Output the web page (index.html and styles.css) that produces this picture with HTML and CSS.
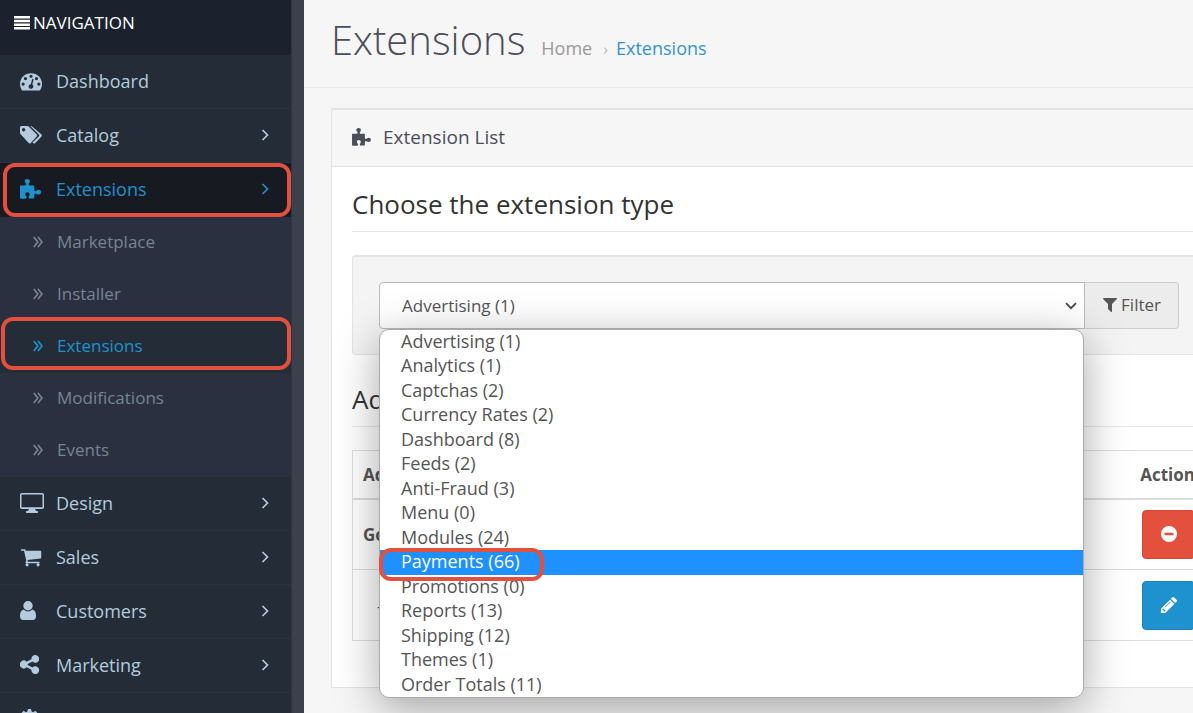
FILE: index.html
```
<!DOCTYPE html>
<html lang="en">
<head>
<meta charset="UTF-8">
<meta name="viewport" content="width=device-width, initial-scale=1.0">
<title>Extensions</title>
<link rel="stylesheet" href="styles.css">
</head>
<body>
<!-- Icon shapes -->
<svg class="sprite" aria-hidden="true">
  <symbol id="i-dash" viewBox="0 0 1792 1792"><path d="M384 1152q0-53-37.500-90.500t-90.500-37.500-90.500 37.500-37.500 90.500 37.500 90.500 90.500 37.500 90.500-37.500 37.500-90.500zm192-448q0-53-37.500-90.500t-90.500-37.500-90.500 37.500-37.500 90.500 37.500 90.500 90.500 37.500 90.500-37.500 37.500-90.500zm428 481l101-382q6-26-7.500-48.500t-38.500-29.500-48 6.500-30 39.500l-101 382q-60 5-107 43.500t-63 98.500q-20 77 20 146t117 89 146-20 89-117q16-60-6-117t-72-91zm660-33q0-53-37.500-90.500t-90.500-37.500-90.500 37.500-37.500 90.500 37.500 90.500 90.500 37.500 90.500-37.500 37.500-90.500zm-640-640q0-53-37.500-90.500t-90.500-37.500-90.500 37.500-37.500 90.500 37.500 90.500 90.500 37.500 90.500-37.500 37.500-90.500zm448 192q0-53-37.500-90.500t-90.500-37.500-90.500 37.500-37.500 90.500 37.500 90.500 90.500 37.500 90.500-37.500 37.500-90.500zm320 448q0 261-141 483-19 29-54 29h-1402q-35 0-54-29-141-221-141-483 0-182 71-348t191-286 286-191 348-71 348 71 286 191 191 286 71 348z"/></symbol>
  <symbol id="i-tags" viewBox="0 0 23 18"><path fill-rule="evenodd" d="M0 1.500Q0 0 1.500 0H7.300Q8.300 0 9.200 .9L16.700 8.400Q17.600 9.500 16.700 10.500L10.800 16.900Q9.700 17.900 8.700 16.900L.9 8.600Q0 7.700 0 6.700ZM3.600 2A1.700 1.700 0 1 0 3.600 5.400A1.700 1.700 0 1 0 3.600 2ZM10.200 0Q11.700 0 12.700 1L21.500 8.400Q22.500 9.500 21.500 10.500L15.200 16.900Q14 18 12.800 17L12.500 16.600L18.800 10.500Q19.800 9.500 18.800 8.400Z"/></symbol>
  <symbol id="i-puzzle" viewBox="0 0 21 20"><path d="M0 6.500H4Q6.200 6.500 6.200 5.200Q6.200 4.700 5.500 4Q4.700 3.200 4.700 2.300Q4.700 0 7.300 0Q9.900 0 9.900 2.300Q9.900 3.200 9.200 4Q8.500 4.700 8.500 5.200Q8.500 6.500 10.500 6.500H14.200V10.200Q14.200 12.300 15.500 12.300Q16 12.300 16.700 11.500Q17.500 10.800 18.400 10.800Q21 10.800 21 13.200Q21 15.600 18.400 15.600Q17.500 15.600 16.700 15Q16 14.400 15.500 14.400Q14.200 14.400 14.200 16.500V19.500H9.300Q8.600 19.500 8.600 18.500Q8.600 17.700 9.200 16.900Q9.700 16.100 9.700 15.300Q9.700 13.200 7.500 13.200Q5.300 13.200 5.300 15.300Q5.300 16.100 6 16.900Q6.700 17.700 6.700 18.600Q6.700 19.500 5 19.800Q2.500 20 0 19.500Z"/></symbol>
  <symbol id="i-desktop" viewBox="0 0 24 20"><path fill-rule="evenodd" d="M1.800 0H22.200Q24 0 24 1.800V14.200Q24 16 22.200 16H15Q15.200 17.500 16.500 18H17.500Q18 18 18 19T17.500 20H6.500Q6 20 6 19T6.500 18H7.500Q8.800 17.500 9 16H1.800Q0 16 0 14.200V1.800Q0 0 1.800 0ZM2 1.500Q1.500 1.500 1.500 2V13.800Q1.500 14.300 2 14.300H22Q22.500 14.300 22.500 13.800V2Q22.500 1.500 22 1.500Z"/></symbol>
  <symbol id="i-cart" viewBox="0 0 1792 1792"><path d="M704 1536q0 52-38 90t-90 38-90-38-38-90 38-90 90-38 90 38 38 90zm896 0q0 52-38 90t-90 38-90-38-38-90 38-90 90-38 90 38 38 90zm128-1088v512q0 24-16.500 42.500t-40.500 21.500l-1044 122q13 60 13 70 0 16-24 64h920q26 0 45 19t19 45-19 45-45 19h-1024q-26 0-45-19t-19-45q0-11 8-31.500t16-36 21.500-40 15.500-29.500l-177-823h-204q-26 0-45-19t-19-45 19-45 45-19h256q16 0 28.500 6.500t19.500 15.500 13 24.500 8 26 5.500 29.500 4.500 26h1201q26 0 45 19t19 45z"/></symbol>
  <symbol id="i-user" viewBox="0 0 16 19"><path d="M8 0A4.700 4.700 0 1 1 8 9.400A4.700 4.700 0 1 1 8 0ZM3.800 8.600Q5.500 10.600 8 10.600T12.200 8.600Q16 9.200 16 15Q16 19 12.700 19H3.300Q0 19 0 15Q0 9.200 3.800 8.600Z"/></symbol>
  <symbol id="i-share" viewBox="0 0 19 19"><path d="M15.200 0A3.900 3.900 0 1 1 12.500 6.600L7.700 9V10L12.500 12.400A3.900 3.900 0 1 1 11.400 14.800L6.600 12.200A3.900 3.900 0 1 1 6.600 6.800L11.400 4.200A3.900 3.900 0 0 1 15.200 0Z"/></symbol>
  <symbol id="i-cog" viewBox="0 0 20 20"><path fill-rule="evenodd" d="M8.400 0H11.600L12.200 2.700L13.800 3.400L16.200 1.900L18.400 4.100L16.800 6.300L17.400 7.900L20 8.400V11.600L17.400 12.200L16.800 13.800L18.300 16.100L16.100 18.300L13.800 16.800L12.200 17.400L11.600 20H8.400L7.800 17.400L6.200 16.800L3.900 18.300L1.700 16.100L3.200 13.800L2.600 12.200L0 11.600V8.400L2.600 7.900L3.200 6.300L1.600 4.100L3.800 1.900L6.200 3.400L7.800 2.700ZM10 6.700A3.300 3.300 0 1 0 10 13.300A3.300 3.300 0 1 0 10 6.700Z"/></symbol>
  <symbol id="i-right" viewBox="0 0 8 12"><path class="line" d="M1.500 1L6.500 6L1.500 11"/></symbol>
  <symbol id="i-double" viewBox="0 0 10 12"><path class="line" d="M.8 1L4.800 6L.8 11M5 1L9 6L5 11"/></symbol>
  <symbol id="i-down" viewBox="0 0 12 8"><path class="line" d="M1 1.200L6 6.200L11 1.200"/></symbol>
  <symbol id="i-bars" viewBox="0 0 16 14"><path d="M0 0H16V2.500H0ZM0 3.700H16V6.200H0ZM0 7.400H16V9.900H0ZM0 11.100H16V13.600H0Z"/></symbol>
  <symbol id="i-filter" viewBox="0 0 14 14"><path d="M.6 0H13.400Q14.300 .3 13.700 1.200L9 6V13.400Q8.700 14.300 7.900 13.700L5.300 11.300Q5 11 5 10.500V6L.3 1.200Q-.3 .3 .6 0Z"/></symbol>
  <symbol id="i-minus" viewBox="0 0 16 16"><path fill-rule="evenodd" d="M8 0A8 8 0 1 1 8 16A8 8 0 1 1 8 0ZM4 6.700Q3.400 6.700 3.400 7.300V8.700Q3.400 9.300 4 9.300H12Q12.600 9.300 12.600 8.700V7.300Q12.600 6.700 12 6.700Z"/></symbol>
  <symbol id="i-pencil" viewBox="0 0 16 16"><path fill-rule="evenodd" d="M9 2.700L13.300 7L4.300 16H0V11.700ZM3.700 14.600L4.500 13.800L2.200 11.500L1.400 12.300V13.300H2.700V14.600ZM9.100 4.700L3.700 10.100L4.200 10.600L9.600 5.200ZM9.900 1.800L11.300 .4Q12.200-.4 13.200 .4L15.600 2.800Q16.400 3.700 15.600 4.700L14.200 6.100Z"/></symbol>
</svg>

<div class="page">
  <!-- Sidebar -->
  <aside class="sidebar">
    <nav class="nav">
      <div class="nav-title"><svg class="icon-bars"><use href="#i-bars"/></svg>NAVIGATION</div>
      <a class="nav-item" href="#"><span class="nav-icon"><svg class="i22"><use href="#i-dash"/></svg></span>Dashboard</a>
      <a class="nav-item" href="#"><span class="nav-icon"><svg class="i-tags"><use href="#i-tags"/></svg></span>Catalog<svg class="chevron"><use href="#i-right"/></svg></a>
      <a class="nav-item active" href="#"><span class="nav-icon"><svg class="i-puzzle"><use href="#i-puzzle"/></svg></span>Extensions<svg class="chevron"><use href="#i-right"/></svg><span class="ring"></span></a>
      <div class="subnav">
        <a class="sub-item" href="#"><svg class="double"><use href="#i-double"/></svg>Marketplace</a>
        <a class="sub-item" href="#"><svg class="double"><use href="#i-double"/></svg>Installer</a>
        <a class="sub-item current" href="#"><svg class="double"><use href="#i-double"/></svg>Extensions<span class="ring"></span></a>
        <a class="sub-item" href="#"><svg class="double"><use href="#i-double"/></svg>Modifications</a>
        <a class="sub-item" href="#"><svg class="double"><use href="#i-double"/></svg>Events</a>
      </div>
      <a class="nav-item" href="#"><span class="nav-icon"><svg class="i-desktop"><use href="#i-desktop"/></svg></span>Design<svg class="chevron"><use href="#i-right"/></svg></a>
      <a class="nav-item" href="#"><span class="nav-icon"><svg class="i22"><use href="#i-cart"/></svg></span>Sales<svg class="chevron"><use href="#i-right"/></svg></a>
      <a class="nav-item" href="#"><span class="nav-icon"><svg class="i-user"><use href="#i-user"/></svg></span>Customers<svg class="chevron"><use href="#i-right"/></svg></a>
      <a class="nav-item" href="#"><span class="nav-icon"><svg class="i19"><use href="#i-share"/></svg></span>Marketing<svg class="chevron"><use href="#i-right"/></svg></a>
      <a class="nav-item" href="#"><span class="nav-icon"><svg class="i19"><use href="#i-cog"/></svg></span>System<svg class="chevron"><use href="#i-right"/></svg></a>
    </nav>
  </aside>

  <!-- Content -->
  <main class="content">
    <header class="page-header">
      <h1>Extensions</h1>
      <div class="breadcrumb"><a href="#">Home</a><span class="sep">›</span><a class="here" href="#">Extensions</a></div>
    </header>

    <section class="panel">
      <h3 class="panel-heading"><svg class="icon-panel"><use href="#i-puzzle"/></svg>Extension List</h3>
      <div class="panel-body">
        <h2 class="legend">Choose the extension type</h2>
        <div class="well">
          <div class="select-wrap">
            <select class="select" aria-label="Extension type">
              <option>Advertising (1)</option>
              <option>Analytics (1)</option>
              <option>Captchas (2)</option>
              <option>Payments (66)</option>
            </select>
            <svg class="caret"><use href="#i-down"/></svg>
            <!-- Opened list -->
            <ul class="options">
              <li>Advertising (1)</li>
              <li>Analytics (1)</li>
              <li>Captchas (2)</li>
              <li>Currency Rates (2)</li>
              <li>Dashboard (8)</li>
              <li>Feeds (2)</li>
              <li>Anti-Fraud (3)</li>
              <li>Menu (0)</li>
              <li>Modules (24)</li>
              <li class="selected">Payments (66)<span class="ring"></span></li>
              <li>Promotions (0)</li>
              <li>Reports (13)</li>
              <li>Shipping (12)</li>
              <li>Themes (1)</li>
              <li>Order Totals (11)</li>
            </ul>
          </div>
          <button class="filter-btn" type="button"><svg class="icon-filter"><use href="#i-filter"/></svg>Filter</button>
        </div>

        <h2 class="legend">Advertising</h2>
        <table class="table">
          <thead>
            <tr><th>Advertising Name</th><th class="right">Action</th></tr>
          </thead>
          <tbody>
            <tr><td><b>Google</b></td><td class="right"><button class="btn btn-danger" type="button" aria-label="Uninstall"><svg class="icon-btn"><use href="#i-minus"/></svg></button></td></tr>
            <tr><td class="store">-</td><td class="right"><button class="btn btn-primary" type="button" aria-label="Edit"><svg class="icon-btn"><use href="#i-pencil"/></svg></button></td></tr>
          </tbody>
        </table>
      </div>
    </section>
  </main>
</div>
</body>
</html>
```
FILE: styles.css
```
:root {
  --blue:#1e91cf;
  --red:#e3503e;
  --line:#e3e3e3;
  --text:#555;
}

* {box-sizing:border-box;}

html, body {
  margin:0; padding:0;
  height:100%;
  overflow:hidden;
}
body {
  font-family:'Open Sans', sans-serif;
  font-size:17px;
  color:var(--text);
  background:#f6f6f6;
}
a {text-decoration:none; color:inherit;}
svg {fill:currentColor; flex:none;}
.line {fill:none; stroke:currentColor; stroke-width:1.700;}
.sprite {display:none;}

.page {display:flex; height:100%;}

/* Sidebar */
.sidebar {width:304px; flex:none; padding-right:12px; background:#3a414d;}
.nav {height:100%; background:#242d37; border-right:1px solid #2b3641;}
.nav-title {
  display:flex; align-items:center; gap:3px;
  height:55px; padding:0 14px 10px;
  background:#1b222e; color:#fff;
  font-size:17px;
}
.icon-bars {width:16px; height:14px;}
.nav-item {
  position:relative;
  display:flex; align-items:center;
  height:54px; padding:0 22px 2px 20px;
  border-bottom:1px solid #27343e;
  color:#b3cbdd;
  font-size:18px;
}
.nav-icon {display:flex; align-items:center; width:36px;}
.i22 {width:22px; height:22px;}
.i19 {width:19px; height:19px;}
.i-tags {width:23px; height:18px;}
.i-puzzle {width:21px; height:20px;}
.i-desktop {width:24px; height:20px;}
.i-user {width:16px; height:19px;}
.chevron {width:8px; height:12px; margin-left:auto;}
.nav-item.active {background:#171a21; color:var(--blue); border-color:#171a21;}

.subnav {background:#2a3040;}
.sub-item {
  position:relative;
  display:flex; align-items:center; gap:14px;
  height:52px; padding:0 0 3px 33px;
  color:#788492;
  font-size:17px;
}
.double {width:10px; height:12px;}
.sub-item.current {background:#242d37; color:var(--blue);}

/* Red marker outline */
.ring {
  position:absolute; inset:0 0 -1px 3px;
  border:4px solid var(--red);
  border-radius:12px;
  z-index:2;
}
.sub-item .ring {inset:-4px 0 3px 1px;}

/* Header */
.content {flex:1; min-width:0; overflow:hidden;}
.page-header {
  display:flex; align-items:baseline; gap:16px;
  height:88px; padding:12px 27px 0;
  border-bottom:1px solid #e8e8e8;
}
h1 {margin:0; font-size:40px; font-weight:300; line-height:56px; color:#4c4d5a;}
.breadcrumb {display:flex; align-items:baseline; font-size:18px; color:#999;}
.sep {margin:0 8px 0 11px; font-size:16px; color:#bbb;}
.here {color:#3394d4;}

/* Panel, runs on past the right edge of the view */
.panel {
  margin:20px -34px 0 27px;
  border:1px solid var(--line);
  border-top-width:2px;
  background:#fff;
}
.panel-heading {
  display:flex; align-items:center; gap:12px;
  height:57px; margin:0; padding:0 20px 3px;
  border-bottom:1px solid var(--line);
  background:#f6f6f6;
  font-size:19px; font-weight:400; color:#4c4d5a;
}
.icon-panel {width:19px; height:18px;}
.panel-body {padding:19px 20px 46px;}
.legend {
  margin:0 0 23px; padding-bottom:9px;
  border-bottom:1px solid #e8e8e8;
  font-size:26px; font-weight:400; line-height:36px; color:#333;
}

.well {
  display:flex;
  margin-bottom:26px; padding:25px 26px;
  border:1px solid var(--line);
  border-top-width:2px;
  border-radius:4px;
  background:#f4f4f4;
}
.select-wrap {position:relative; flex:1;}
.select {
  display:block; width:100%; height:47px; padding:0 22px;
  border:1px solid #bbb; border-radius:4px 0 0 4px;
  background:#fff; color:var(--text);
  font-family:inherit; font-size:17px;
  appearance:none;
}
.caret {position:absolute; right:8px; top:20px; width:12px; height:8px; color:#444;}
.filter-btn {
  display:flex; align-items:center; gap:4px;
  height:47px; padding:0 17px 2px 18px;
  border:1px solid #ccc; border-left:0; border-radius:0 4px 4px 0;
  background:#ececec; color:var(--text);
  font-family:inherit; font-size:17px;
}
.icon-filter {width:14px; height:14px;}

/* Opened select list */
.options {
  position:absolute; left:0; right:1px; top:47px; z-index:5;
  display:grid; grid-auto-rows:1fr;
  height:369px; margin:0; padding:0;
  border:1px solid #aaa; border-radius:10px;
  background:#fff;
  box-shadow:0 10px 44px rgba(0,0,0,.35);
  list-style:none;
  font-size:18px; line-height:22px;
}
.options li {position:relative; padding-left:21px;}
.options .selected {background:#1e90ff; color:#fff;}
.options .ring {inset:-2px auto -6px -1px; width:165px;}

/* Table */
.table {width:100%; border-collapse:collapse; border:1px solid #ddd;}
.table th, .table td {padding:0 10px; text-align:left;}
.table th {height:48px; border-bottom:2px solid #ddd; font-weight:700;}
.table td {height:71px; border-top:1px solid #ddd;}
.table .right {text-align:right;}
.table .store {padding-left:24px;}
.btn {
  display:inline-flex; align-items:center; justify-content:center;
  width:53px; height:49px; padding:0;
  border:1px solid; border-radius:4px;
  color:#fff;
  vertical-align:middle;
}
.btn-danger {background:var(--red); border-color:#d64532;}
.btn-primary {background:var(--blue); border-color:#1b82ba;}
.icon-btn {width:16px; height:16px;}
```
